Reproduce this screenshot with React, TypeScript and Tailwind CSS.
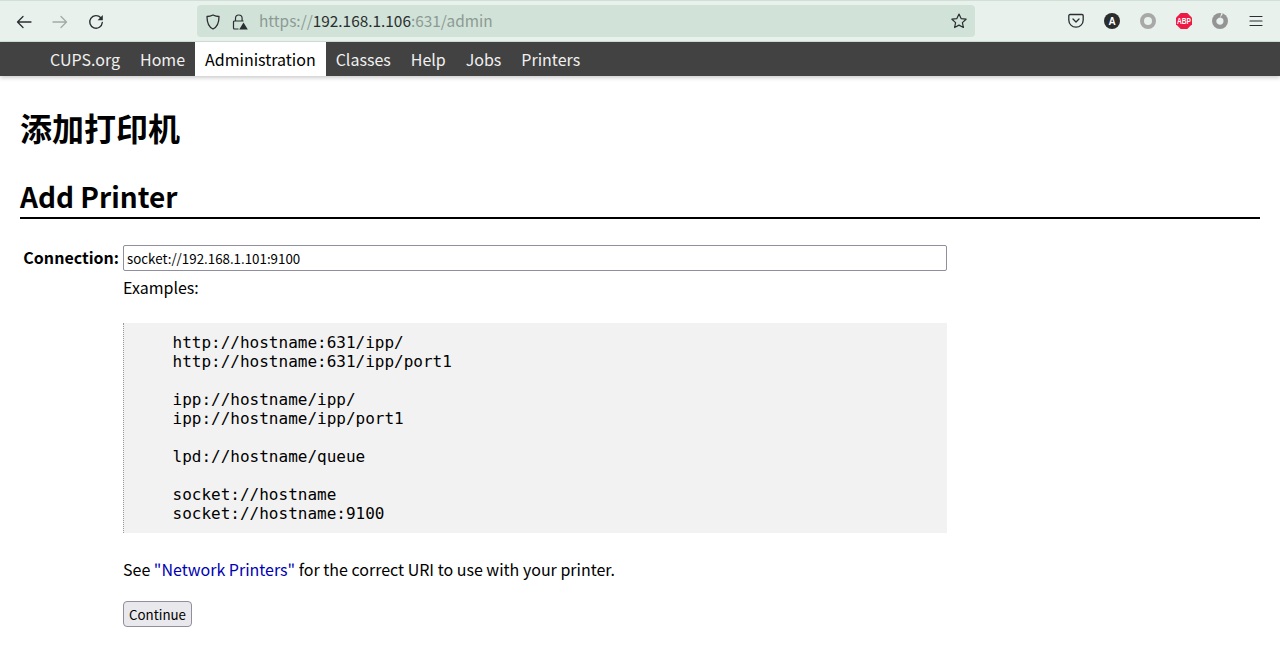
const sans = "font-['Noto_Sans_CJK_SC','Noto_Sans',sans-serif]"

function NavItem({ label, active }: { label: string; active?: boolean }) {
  return (
    <a
      className={
        active
          ? "flex h-[34px] items-center bg-white px-2.5 text-black"
          : "flex h-[34px] items-center px-2.5 text-[#f0f0f0]"
      }
    >
      {label}
    </a>
  )
}

function ToolbarIcons() {
  return (
    <div className="flex items-center gap-5 pr-[16px]">
      {/* pocket */}
      <svg width="16" height="16" viewBox="0 0 16 16" fill="none" stroke="#2b2e33" strokeWidth="1.3">
        <path d="M2 1.500h12a1.200 1.200 0 0 1 1.200 1.200v4.300a7.200 7.200 0 0 1-14.400 0V2.700A1.200 1.200 0 0 1 2 1.500z" />
        <path d="M5 6l3 3 3-3" strokeLinecap="round" strokeLinejoin="round" />
      </svg>
      {/* A */}
      <div className="flex h-4 w-4 items-center justify-center rounded-full bg-[#2a2c2d] font-['Liberation_Sans',sans-serif] text-[10px] font-bold text-white">
        A
      </div>
      {/* grey ring */}
      <div className="h-4 w-4 rounded-full border-[4px] border-[#a8a8a8] bg-[#e8f1ec]" />
      {/* abp */}
      <svg width="16" height="16" viewBox="0 0 16 16">
        <path d="M4.700 0h6.600L16 4.700v6.600L11.300 16H4.700L0 11.300V4.700z" fill="#ee1a46" />
        <text transform="translate(8 11) scale(1 1.3)" textAnchor="middle" fontFamily="Liberation Sans" fontWeight="700" fontSize="6.6" fill="#fff">
          ABP
        </text>
      </svg>
      {/* grey flame ring */}
      <svg width="16" height="16" viewBox="0 0 16 16">
        <circle cx="8" cy="8" r="8" fill="#949494" />
        <path d="M8.300 4.500a3.600 3.600 0 1 1-4 3.600c0-1.200.8-1.900 1.500-2.500.8-.6 1.700-1 2.500-1.100z" fill="#e8f1ec" />
        <path d="M9.300 0L8 4.700l3-4z" fill="#e8f1ec" />
      </svg>
      {/* menu */}
      <svg width="16" height="16" viewBox="0 0 16 16" fill="none" stroke="#2b2e33" strokeWidth="1.2" strokeLinecap="round">
        <path d="M2 3.500h12M2 8h12M2 12.500h12" />
      </svg>
    </div>
  )
}

const examples = `    http://hostname:631/ipp/
    http://hostname:631/ipp/port1

    ipp://hostname/ipp/
    ipp://hostname/ipp/port1

    lpd://hostname/queue

    socket://hostname
    socket://hostname:9100`

export default function App() {
  return (
    <div className={`h-[653px] w-[1280px] overflow-hidden bg-white text-black ${sans}`}>
      <div className="flex h-[42px] items-center justify-between border-y border-[#cfe0d7] bg-[#e8f1ec]">
        <div className="flex items-center">
          <div className="mt-px flex items-center gap-[20px] pl-[16px] pr-[93px]">
            <svg width="16" height="16" viewBox="0 0 16 16" fill="none" stroke="#2b2e33" strokeWidth="1.300" strokeLinecap="round" strokeLinejoin="round">
              <path d="M15 8H1.500M7 2.500L1.500 8 7 13.500" />
            </svg>
            <svg width="16" height="16" viewBox="0 0 16 16" fill="none" stroke="#a3aaa7" strokeWidth="1.300" strokeLinecap="round" strokeLinejoin="round">
              <path d="M1 8h13.500M9 2.500L14.500 8 9 13.500" />
            </svg>
            <svg width="16" height="16" viewBox="0 0 16 16" fill="none" stroke="#2b2e33" strokeWidth="1.400" strokeLinecap="round" strokeLinejoin="round">
              <path d="M12.800 3.800A6.300 6.300 0 1 0 14.300 8.500" />
              <path d="M14.800 1v5.200H9.600z" fill="#2b2e33" stroke="none" />
            </svg>
          </div>
          <div className="flex h-8 w-[778px] items-center justify-between rounded-[4px] bg-[#d1e2d8] pl-2 pr-2">
            <div className="flex items-center">
              <svg className="mt-px" width="16" height="16" viewBox="0 0 16 16" fill="none" stroke="#2b2e33" strokeWidth="1.300">
                <path d="M8 1c2 1 4 1.500 6 1.500 0 6-1.500 10.500-6 12.500-4.500-2-6-6.500-6-12.500C4 2.500 6 2 8 1z" strokeLinejoin="round" />
              </svg>
              <svg className="ml-[11px] mt-px" width="16" height="16" viewBox="0 0 16 16" fill="none" stroke="#2b2e33" strokeWidth="1.200">
                <path d="M3.500 7V4.300a3.300 3.300 0 0 1 6.600 0V7" />
                <path d="M6.500 15H2.500a1 1 0 0 1-1-1V8a1 1 0 0 1 1-1h9" />
                <path d="M11.500 8.500l4.300 7H7.200z" fill="#2b2e33" stroke="none" />
              </svg>
              <div className="ml-[11px] text-[15.4px] leading-none text-[#8c9a93]">
                https://<span className="text-[#2a2e2f]">192.168.1.106</span>:631/admin
              </div>
            </div>
            <svg width="16" height="16" viewBox="0 0 16 16" fill="none" stroke="#2b2e33" strokeWidth="1.200" strokeLinejoin="round">
              <path d="M8 1l2.100 4.600 5 .6-3.700 3.400 1 4.900L8 12.100l-4.400 2.400 1-4.900L.9 6.200l5-.6z" />
            </svg>
          </div>
        </div>
        <ToolbarIcons />
      </div>

      <nav className="flex h-[34px] items-center bg-[#424242] pl-10 text-[16px] shadow-[0_2px_4px_rgba(0,0,0,0.2)]">
        <NavItem label="CUPS.org" />
        <NavItem label="Home" />
        <NavItem label="Administration" active />
        <NavItem label="Classes" />
        <NavItem label="Help" />
        <NavItem label="Jobs" />
        <NavItem label="Printers" />
      </nav>

      <main className="px-5">
        <h1 className="mt-[28px] text-[32px] font-bold leading-[46px]">添加打印机</h1>
        <h2 className="mt-[26px] border-b-2 border-black text-[28px] font-bold leading-[41px]">Add Printer</h2>

        <div className="mt-[26px] flex">
          <div className="w-[99px] text-right text-[16px] font-bold leading-[24px]">Connection:</div>
          <div className="ml-1 w-[824px]">
            <input
              readOnly
              value="socket://192.168.1.101:9100"
              className="block h-[26px] w-full rounded-[2px] border border-[#8f8f9d] bg-white px-[3px] text-[13.333px] outline-none"
            />
            <p className="mt-[4px] text-[16px] leading-[24px]">Examples:</p>
            <pre className="mt-[24px] h-[210px] border-l border-dotted border-[#999] bg-[#f2f2f2] pt-[10px] pl-[10px] font-['DejaVu_Sans_Mono',monospace] text-[16px] leading-[19px]">{examples}</pre>
            <p className="mt-[24px] text-[16px] leading-[24px]">
              See <a className="text-[#0000b4]">"Network Printers"</a> for the correct URI to use with your printer.
            </p>
            <button className="mt-[20px] flex h-[26px] items-center rounded-[4px] border border-[#8f8f9d] bg-[#e9e9ed] px-[5px] pt-px text-[13.333px] text-black">
              Continue
            </button>
          </div>
        </div>
      </main>
    </div>
  )
}
